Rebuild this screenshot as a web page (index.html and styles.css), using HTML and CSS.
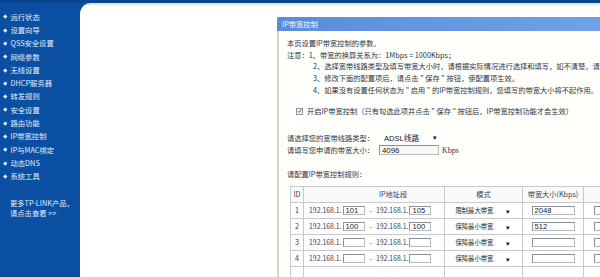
FILE: index.html
```html
<!DOCTYPE html>
<html lang="zh-CN">
<head>
<meta charset="utf-8">
<title>IP带宽控制</title>
<link rel="stylesheet" href="styles.css">
</head>
<body>
<div class="page">
  <div class="topbar"></div>
  <div class="frame">
    <nav class="side">
      <ul class="menu">
        <li><span class="dot"></span>运行状态</li>
        <li><span class="dot"></span>设置向导</li>
        <li><span class="dot"></span>QSS安全设置</li>
        <li><span class="dot"></span>网络参数</li>
        <li><span class="dot"></span>无线设置</li>
        <li><span class="dot"></span>DHCP服务器</li>
        <li><span class="dot"></span>转发规则</li>
        <li><span class="dot"></span>安全设置</li>
        <li><span class="dot"></span>路由功能</li>
        <li><span class="dot"></span>IP带宽控制</li>
        <li><span class="dot"></span>IP与MAC绑定</li>
        <li><span class="dot"></span>动态DNS</li>
        <li><span class="dot"></span>系统工具</li>
      </ul>
      <p class="more">更多TP-LINK产品，<br>请点击查看 &gt;&gt;</p>
    </nav>
    <main class="main">
      <section class="panel">
        <div class="panel-head">IP带宽控制</div>
        <div class="panel-body">
          <p class="line">本页设置IP带宽控制的参数。</p>
          <p class="line">注意：1、带宽的换算关系为：1Mbps = 1000Kbps；</p>
          <p class="line indent">2、选择宽带线路类型及填写带宽大小时，请根据实际情况进行选择和填写，如不清楚，请咨询您的宽带服务提供商。</p>
          <p class="line indent">3、修改下面的配置项后，请点击 " 保存 " 按钮，使配置项生效。</p>
          <p class="line indent">4、如果没有设置任何状态为 " 启用 " 的IP带宽控制规则，您填写的带宽大小将不起作用。</p>

          <div class="check-row">
            <span class="checkbox"><svg viewBox="0 0 8 8" width="6" height="6"><path d="M1.2 4.2 L3.2 6.2 L6.8 1.8" fill="none" stroke="#2a3a55" stroke-width="1.3"/></svg></span>
            <span>开启IP带宽控制（只有勾选此项并点击 " 保存 " 按钮后，IP带宽控制功能才会生效）</span>
          </div>

          <div class="form-row first">
            <span class="label">请选择您的宽带线路类型：</span>
            <span class="select line-type">ADSL线路<span class="arrow">▾</span></span>
          </div>
          <div class="form-row">
            <span class="label">请填写您申请的带宽大小：</span>
            <span class="input bw-total">4096</span>
            <span class="unit">Kbps</span>
          </div>

          <p class="line rules-title">请配置IP带宽控制规则：</p>

          <table class="rules">
            <colgroup>
              <col class="c-id"><col class="c-ip"><col class="c-mode"><col class="c-bw"><col class="c-en">
            </colgroup>
            <thead>
              <tr><th>ID</th><th class="h-ip">IP地址段</th><th>模式</th><th>带宽大小(Kbps)</th><th></th></tr>
            </thead>
            <tbody>
              <tr>
                <td class="id">1</td>
                <td class="ip">192.168.1.<span class="input oct">101</span><span class="dash">-</span>192.168.1.<span class="input oct">105</span></td>
                <td><span class="select mode">限制最大带宽<span class="arrow">▾</span></span></td>
                <td><span class="input bw">2048</span></td>
                <td><span class="input en"></span></td>
              </tr>
              <tr>
                <td class="id">2</td>
                <td class="ip">192.168.1.<span class="input oct">100</span><span class="dash">-</span>192.168.1.<span class="input oct">100</span></td>
                <td><span class="select mode">保障最小带宽<span class="arrow">▾</span></span></td>
                <td><span class="input bw">512</span></td>
                <td><span class="input en"></span></td>
              </tr>
              <tr>
                <td class="id">3</td>
                <td class="ip">192.168.1.<span class="input oct"></span><span class="dash">-</span>192.168.1.<span class="input oct"></span></td>
                <td><span class="select mode">保障最小带宽<span class="arrow">▾</span></span></td>
                <td><span class="input bw"></span></td>
                <td><span class="input en"></span></td>
              </tr>
              <tr>
                <td class="id">4</td>
                <td class="ip">192.168.1.<span class="input oct"></span><span class="dash">-</span>192.168.1.<span class="input oct"></span></td>
                <td><span class="select mode">保障最小带宽<span class="arrow">▾</span></span></td>
                <td><span class="input bw"></span></td>
                <td><span class="input en"></span></td>
              </tr>
              <tr class="blank">
                <td></td><td></td><td></td><td></td><td></td>
              </tr>
            </tbody>
          </table>
        </div>
      </section>
    </main>
  </div>
</div>
</body>
</html>
```
FILE: styles.css
```css
* { box-sizing: border-box; }
html, body { margin: 0; padding: 0; overflow: hidden; }
body {
  font-family: "Noto Sans CJK SC", "Liberation Sans", sans-serif;
  background: #fff;
}
p { margin: 0; }
ul { margin: 0; padding: 0; list-style: none; }

.page {
  width: 600px;
  height: 277px;
  overflow: hidden;
  display: flex;
  flex-direction: column;
  background: #0b4fa2;
}
.topbar {
  height: 3px;
  flex: none;
  background: #0a4790;
}
.frame {
  flex: 1;
  display: flex;
  min-height: 0;
}

/* sidebar */
.side {
  width: 80px;
  flex: none;
  padding-top: 7px;
  color: #e3ecfa;
  font-size: 7.3px;
}
.menu li {
  height: 13.3px;
  display: flex;
  align-items: center;
  padding-left: 4px;
  white-space: nowrap;
}
.dot {
  width: 2.5px;
  height: 2.5px;
  background: #eef4ff;
  transform: rotate(45deg);
  margin-right: 4px;
  flex: none;
}
.more {
  margin-top: 15px;
  padding-left: 10px;
  line-height: 10.5px;
  white-space: nowrap;
}

/* main frame */
.main {
  flex: 1;
  min-width: 0;
  overflow: hidden;
  border-top-left-radius: 11px;
  background: linear-gradient(#d3eefa 0, #d3eefa 1.5px, #fffff2 2.5px, #ffffff 14px);
  padding: 14px 0 0 197px;
  display: flex;
  align-items: flex-start;
}

.panel {
  width: 420px;
  flex: none;
  color: #2b3446;
  font-size: 7.25px;
}
.panel-head {
  height: 14px;
  line-height: 14px;
  padding-left: 5px;
  color: #f4f8ff;
  background: linear-gradient(to right, #5a8cdb, #6b9de6 60%, #78a8ec);
  border-top-left-radius: 2px;
  font-size: 7.3px;
}
.panel-body {
  border-left: 2px solid #d7d3c7;
  background: #fffffb;
  padding: 7px 0 40px 8px;
}
.line {
  line-height: 11.7px;
  white-space: nowrap;
}
.indent { padding-left: 26px; }

.check-row {
  margin-top: 8.5px;
  height: 12px;
  display: flex;
  align-items: center;
  padding-left: 9px;
  white-space: nowrap;
}
.checkbox {
  width: 7px;
  height: 7px;
  border: 1px solid #8d949c;
  background: #f3f3f0;
  display: inline-flex;
  align-items: center;
  justify-content: center;
  margin-right: 4px;
}

.form-row {
  height: 12.4px;
  display: flex;
  align-items: center;
  white-space: nowrap;
}
.form-row.first { margin-top: 14.5px; }
.label { width: 92px; flex: none; }

.select {
  display: inline-flex;
  align-items: center;
  background: #fff;
  font-family: "Liberation Sans", "Noto Sans CJK SC", sans-serif;
  color: #222;
}
.arrow {
  font-size: 7px;
  color: #111;
  margin-left: auto;
}
.line-type {
  width: 63px;
  height: 10px;
  padding: 0 5px 0 5px;
  font-size: 7.6px;
}

.input {
  display: inline-flex;
  align-items: center;
  height: 9.5px;
  border: 1px solid #8a9098;
  border-right-color: #b5b9be;
  border-bottom-color: #b5b9be;
  background: #fff;
  font-family: "Liberation Sans", sans-serif;
  color: #222;
  padding-left: 2px;
  vertical-align: middle;
}
.bw-total {
  width: 60px;
  font-size: 7.8px;
  background: #f7f7f5;
}
.unit {
  margin-left: 3px;
  font-family: "Liberation Serif", serif;
  font-size: 8px;
}

.rules-title { margin-top: 12.5px; }

/* table */
.rules {
  margin: 5px 0 0 3px;
  border-collapse: collapse;
  table-layout: fixed;
  width: 363px;
  background: #fff;
  font-size: 7.2px;
}
.c-id { width: 13px; }
.c-ip { width: 141px; }
.c-mode { width: 78px; }
.c-bw { width: 61px; }
.c-en { width: 70px; }
.rules th, .rules td {
  border: 1px solid #c9c9c9;
  height: 16px;
  padding: 0;
  white-space: nowrap;
  text-align: center;
  font-weight: normal;
}
.rules th {
  background: #fafafa;
  color: #3a4050;
}
.rules th.h-ip { padding-left: 38px; }
.rules td { color: #3a4050; }
.rules td.ip {
  text-align: left;
  padding-left: 5px;
  font-size: 6.9px;
}
.oct {
  width: 22px;
  font-size: 7.6px;
  margin-left: 1px;
}
.dash { margin: 0 4px 0 5px; }
.mode {
  width: 60px;
  height: 10px;
  padding: 0 4px 0 2px;
  font-size: 6.3px;
  font-family: "Noto Sans CJK SC", sans-serif;
  vertical-align: middle;
}
.bw {
  width: 43px;
  font-size: 7.6px;
}
.rules td:last-child { text-align: left; padding-left: 10px; }
.en { width: 20px; }
```
